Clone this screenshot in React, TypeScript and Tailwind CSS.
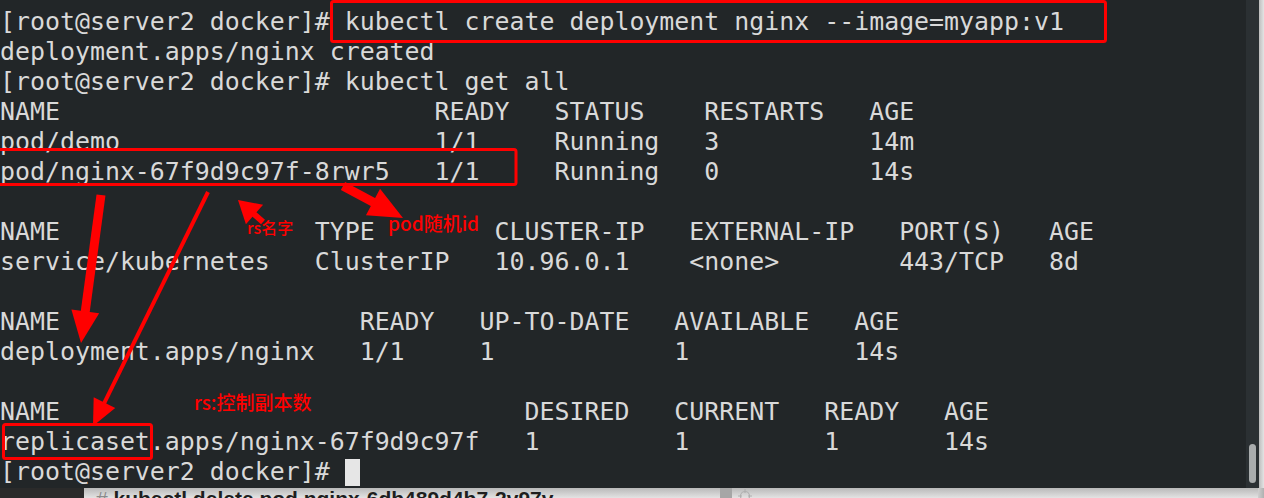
// pad each cell to its column width, like kubectl's tabwriter output
const row = (cells: string[], widths: number[]) =>
  cells.map((c, i) => (i < widths.length ? c.padEnd(widths[i]) : c)).join("");

const podW = [29, 8, 10, 11];
const svcW = [21, 12, 13, 14, 10];
const depW = [24, 8, 13, 12];
const rsW = [35, 10, 10, 8];

const lines = [
  "[root@server2 docker]# kubectl create deployment nginx --image=myapp:v1",
  "deployment.apps/nginx created",
  "[root@server2 docker]# kubectl get all",
  row(["NAME", "READY", "STATUS", "RESTARTS", "AGE"], podW),
  row(["pod/demo", "1/1", "Running", "3", "14m"], podW),
  row(["pod/nginx-67f9d9c97f-8rwr5", "1/1", "Running", "0", "14s"], podW),
  "",
  row(["NAME", "TYPE", "CLUSTER-IP", "EXTERNAL-IP", "PORT(S)", "AGE"], svcW),
  row(["service/kubernetes", "ClusterIP", "10.96.0.1", "<none>", "443/TCP", "8d"], svcW),
  "",
  row(["NAME", "READY", "UP-TO-DATE", "AVAILABLE", "AGE"], depW),
  row(["deployment.apps/nginx", "1/1", "1", "1", "14s"], depW),
  "",
  row(["NAME", "DESIRED", "CURRENT", "READY", "AGE"], rsW),
  row(["replicaset.apps/nginx-67f9d9c97f", "1", "1", "1", "14s"], rsW),
];

// shaft + head for a straight annotation arrow
function Arrow({
  x1,
  y1,
  x2,
  y2,
  w,
  hl,
  hw,
}: {
  x1: number;
  y1: number;
  x2: number;
  y2: number;
  w: number;
  hl: number;
  hw: number;
}) {
  const dx = x2 - x1;
  const dy = y2 - y1;
  const len = Math.hypot(dx, dy);
  const ux = dx / len;
  const uy = dy / len;
  const bx = x2 - ux * hl;
  const by = y2 - uy * hl;
  const px = -uy;
  const py = ux;
  return (
    <g fill="#ff0000" stroke="#ff0000">
      <line x1={x1} y1={y1} x2={bx + ux * 2} y2={by + uy * 2} strokeWidth={w} />
      <polygon
        stroke="none"
        points={`${x2},${y2} ${bx + px * hw},${by + py * hw} ${bx - px * hw},${by - py * hw}`}
      />
    </g>
  );
}

function Annotations() {
  return (
    <svg className="pointer-events-none absolute inset-0" width="1246" height="488">
      <g fill="none" stroke="#ff0000" strokeWidth="3">
        <rect x="331.5" y="1.5" width="774" height="40" rx="2" />
        <rect x="-2" y="149.5" width="518" height="35" rx="2" />
        <rect x="3.5" y="424.5" width="148" height="34" rx="2" />
      </g>
      <Arrow x1={101} y1={195} x2={81} y2={343} w={9} hl={32} hw={14} />
      <Arrow x1={208} y1={192} x2={93} y2={426} w={4} hl={26} hw={12} />
      <Arrow x1={263} y1={222} x2={238} y2={200} w={6} hl={22} hw={13} />
      <Arrow x1={343} y1={186} x2={403} y2={218} w={9} hl={34} hw={15} />
    </svg>
  );
}

export default function App() {
  return (
    <div className="flex h-[498px] w-[1264px] flex-col overflow-hidden bg-[#dcdcdc]">
      <div className="flex h-[488px]">
        <div className="relative flex-1 whitespace-pre bg-[#222628] pt-[7px] font-['DejaVu_Sans_Mono',monospace] text-[24.9px] leading-[30px] text-[#d9d9d9]">
          {lines.map((line, i) => (
            <div key={i} className="h-[30px]">
              {line}
            </div>
          ))}
          <div className="flex h-[30px] items-center">
            <span>[root@server2 docker]# </span>
            <span className="inline-block h-[27px] w-[15px] bg-[#e6e6e6]" />
          </div>

          <Annotations />

          <span className="absolute left-[247px] top-[216px] font-['Noto_Sans_CJK_SC',sans-serif] text-[16px] font-medium leading-[22px] text-[#f00]">
            rs名字
          </span>
          <span className="absolute left-[388px] top-[211px] font-['Noto_Sans_CJK_SC',sans-serif] text-[19px] font-medium leading-[24px] text-[#f00]">
            pod随机id
          </span>
          <span className="absolute left-[194px] top-[390px] font-['Noto_Sans_CJK_SC',sans-serif] text-[19px] font-medium leading-[24px] text-[#f00]">
            rs:控制副本数
          </span>
        </div>

        <div className="flex w-[13px] flex-col justify-end bg-[#2b3033] px-[3px] pb-[5px]">
          <div className="h-[39px] w-[7px] rounded-full bg-[#a9acad]" />
        </div>
        <div className="w-[5px] bg-gradient-to-r from-[#bdbdbd] to-[#e4e4e4]" />
      </div>

      <div className="flex h-[10px]">
        <div className="w-[84px] bg-[#2a2a2a]" />
        <div className="flex flex-1 bg-gradient-to-b from-[#b9b9b9] to-[#e3e3e3]">
          <div className="w-[636px] overflow-hidden whitespace-pre pl-[12px] font-['Liberation_Sans',sans-serif] text-[21px] leading-[21px]">
            <span className="text-[#8a8a8a]"># </span>
            <span className="font-bold text-[#1e1e1e]">kubectl delete pod nginx-6db489d4b7-2v97v</span>
          </div>
          <div className="w-[12px] bg-[#a6a6a6]" />
          <svg className="ml-[6px] mt-[1px]" width="14" height="14" viewBox="0 0 14 14">
            <g fill="none" stroke="#b0b0b0" strokeWidth="1.2">
              <circle cx="7" cy="7" r="4.5" />
              <path d="M7 0v4M7 10v4M0 7h4M10 7h4" />
            </g>
          </svg>
          <div className="flex-1" />
          <div className="w-[6px] bg-gradient-to-r from-[#cfcfcf] to-[#b0b0b0]" />
        </div>
      </div>
    </div>
  );
}
